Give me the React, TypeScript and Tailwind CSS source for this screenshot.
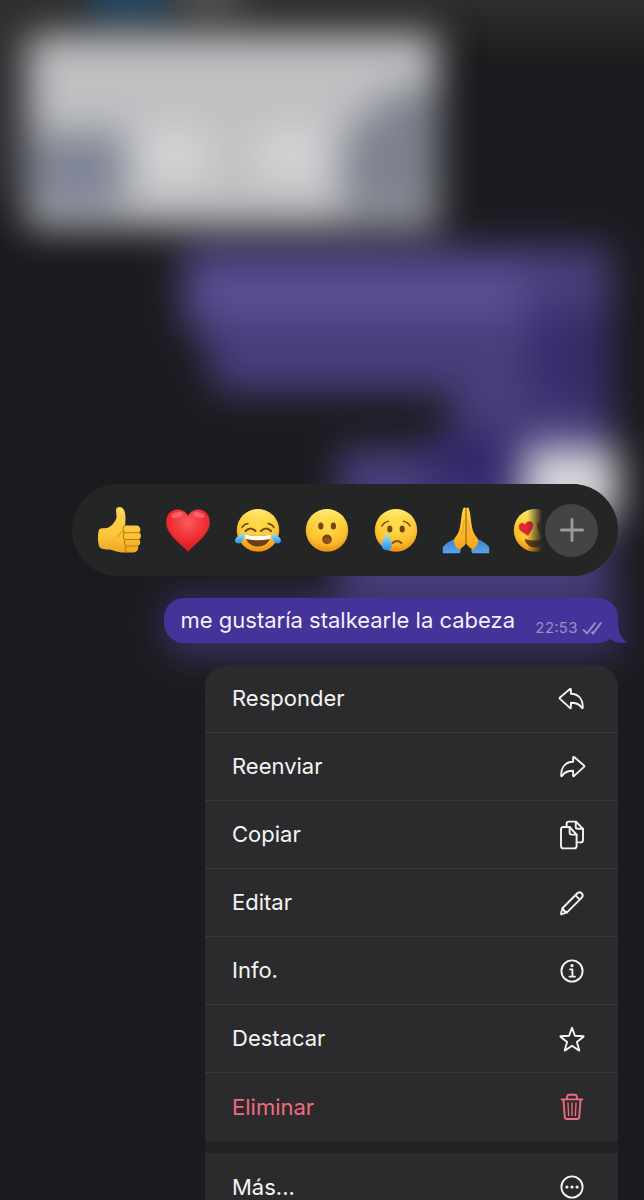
import type { ReactNode } from "react";
import clsx from "clsx";

const Gradients = () => (
  <svg className="absolute h-0 w-0" aria-hidden="true">
    <defs>
      <linearGradient id="skin" x1="0" y1="0" x2="0" y2="1">
        <stop offset="0" stopColor="#ffd250" />
        <stop offset="0.6" stopColor="#fdb92c" />
        <stop offset="1" stopColor="#f5a01c" />
      </linearGradient>
      <radialGradient id="face" cx="0.5" cy="0.42" r="0.58">
        <stop offset="0" stopColor="#fddc4a" />
        <stop offset="0.75" stopColor="#fcc42f" />
        <stop offset="1" stopColor="#ee9418" />
      </radialGradient>
      <linearGradient id="gloss" x1="0" y1="0" x2="0" y2="1">
        <stop offset="0" stopColor="#fff683" stopOpacity="0.8" />
        <stop offset="0.5" stopColor="#fed640" stopOpacity="0.1" />
        <stop offset="1" stopColor="#f08a10" stopOpacity="0.65" />
      </linearGradient>
      <linearGradient id="thumb" x1="0" y1="0" x2="0" y2="1">
        <stop offset="0" stopColor="#fed354" />
        <stop offset="0.6" stopColor="#fcc63a" />
        <stop offset="1" stopColor="#eea523" />
      </linearGradient>
      <radialGradient id="heart" cx="0.5" cy="0.3" r="0.75">
        <stop offset="0" stopColor="#fb5a5d" />
        <stop offset="0.55" stopColor="#f02c34" />
        <stop offset="1" stopColor="#cf1220" />
      </radialGradient>
      <linearGradient id="tear" x1="0" y1="0" x2="0" y2="1">
        <stop offset="0" stopColor="#a5ecfd" />
        <stop offset="1" stopColor="#2593e6" />
      </linearGradient>
      <linearGradient id="sleeve" x1="0" y1="0" x2="0" y2="1">
        <stop offset="0" stopColor="#3f82cf" />
        <stop offset="1" stopColor="#5ba4ec" />
      </linearGradient>
    </defs>
  </svg>
);

const Face = ({ children }: { children: ReactNode }) => (
  <>
    <circle cx="24" cy="24.3" r="21.2" fill="url(#face)" />
    <circle cx="24" cy="24.3" r="21.2" fill="url(#gloss)" />
    {children}
  </>
);

const reactions = [
  {
    label: "Me gusta",
    art: (
      <>
        <path
          d="M21 4C21 0.5 26 0.2 28 2.5C30.5 5.5 31 10 30 19.5H42C45.5 19.7 46.5 25 44 26.6C46.6 28 46.5 32 44 33.5C46 35 45.5 39 43 40C44 43 42 46.5 38.5 46.6H28C22 46.6 19 44.2 14 43.6C8 43.4 5 42.6 4.2 40.5C2.6 36 2.6 28 4 23.8C5 22 9 22.4 12 22C15.5 21.4 20 16.5 21.3 12.5C22 9.5 21 7 21 4Z"
          fill="url(#thumb)"
        />
        <path
          d="M30 19.7C27.5 20.5 27 25.5 30 26.7H44M30 26.7C27.5 28 27.5 32.5 30.5 33.5H44M30.5 33.5C28.5 35 29 39 31.5 40H43M31.5 40C29.5 42 30 45.5 32.5 46.4"
          fill="none"
          stroke="#bd7c0c"
          strokeWidth="1.1"
        />
        <path d="M28 25Q24 27 22.5 31" fill="none" stroke="#dc9a22" strokeWidth="1.2" />
        <path d="M24 3Q26.5 3.5 27 8" fill="none" stroke="#ffe47e" strokeWidth="1.5" />
      </>
    ),
  },
  {
    label: "Me encanta",
    art: (
      <>
        <path
          d="M24 46C20 40 2.5 30 2.2 16.5C2 8.5 7.5 3.6 13.3 3.6C18 3.6 22 6 24 10C26 6 30 3.6 34.7 3.6C40.5 3.6 46 8.5 45.8 16.5C45.5 30 28 40 24 46Z"
          fill="url(#heart)"
        />
        <ellipse cx="13" cy="9" rx="6" ry="2.6" fill="#ff9b9b" opacity="0.45" transform="rotate(-14 13 9)" />
        <ellipse cx="35" cy="9" rx="6" ry="2.6" fill="#ff9b9b" opacity="0.45" transform="rotate(14 35 9)" />
      </>
    ),
  },
  {
    label: "Me divierte",
    art: (
      <Face>
        <g fill="none" stroke="#76430f" strokeLinecap="round" strokeWidth="1.5">
          <path d="M11.5 25Q16.5 20 21.5 25M27 25Q32 20 37 25" strokeWidth="2" />
          <path d="M8 21.5Q10 18 14 17.5M40 21.5Q38 18 34 17.5" />
        </g>
        <path d="M11 28.5Q24 31.5 37 28.5C36.5 36 31 40.5 24 40.5C17 40.5 11.5 36 11 28.5Z" fill="#713d14" />
        <path d="M11 28.5Q24 31.5 37 28.5C37 31 36.6 32 36 33Q24 35.6 12 33C11.4 32 11 31 11 28.5Z" fill="#fff" />
        <path d="M9.8 26C10.5 31 9 37.5 4.5 37.5C0.5 37.5 0 33.5 3 31C5 29.3 8 28.5 9.8 26Z" fill="url(#tear)" />
        <path d="M38.2 26C37.5 31 39 37.5 43.5 37.5C47.5 37.5 48 33.5 45 31C43 29.3 40 28.5 38.2 26Z" fill="url(#tear)" />
      </Face>
    ),
  },
  {
    label: "Me asombra",
    art: (
      <Face>
        <g fill="#76430f">
          <ellipse cx="17.8" cy="20" rx="2.6" ry="3.5" />
          <ellipse cx="30.4" cy="20" rx="2.6" ry="3.5" />
          <circle cx="24" cy="33.4" r="4.8" />
        </g>
        <ellipse cx="24" cy="34.4" rx="3.6" ry="3" fill="#8d541b" />
      </Face>
    ),
  },
  {
    label: "Me entristece",
    art: (
      <Face>
        <g fill="#76430f">
          <ellipse cx="17.8" cy="23" rx="2.6" ry="3.6" />
          <ellipse cx="30.2" cy="23" rx="2.6" ry="3.6" />
        </g>
        <g fill="none" stroke="#8a5211" strokeLinecap="round" strokeWidth="1.6">
          <path d="M10 20Q12 16 16.5 15.2M38 20Q36 16 31.5 15.2" />
          <path d="M20.5 37Q25 33 29.5 37" strokeWidth="2" />
        </g>
        <path d="M14.8 27C17 31.5 20 35.5 20 39A5.2 5.2 0 0 1 9.6 39C9.6 35.5 12.6 31.5 14.8 27Z" fill="url(#tear)" />
      </Face>
    ),
  },
  {
    label: "Gracias",
    art: (
      <>
        <path d="M10 34Q5.5 36 0.8 41V47.3H17.5L19 44Q14 40 12 34Z" fill="url(#sleeve)" />
        <path d="M38 34Q42.5 36 47.2 41V47.3H30.5L29 44Q34 40 36 34Z" fill="url(#sleeve)" />
        <path
          d="M24 3C23.5 1 21.3 1 21 3L19.8 8C19 14 18.6 20 17 25C15.5 29 13 31 11.5 34C12 38.5 14 42 17.6 43.7C20 41 23 40 24 37C25 40 28 41 30.4 43.7C34 42 36 38.5 36.5 34C35 31 32.5 29 31 25C29.4 20 29 14 28.2 8L27 3C26.7 1 24.5 1 24 3Z"
          fill="url(#skin)"
        />
        <path d="M24 3V37" fill="none" stroke="#a96808" strokeWidth="1.3" />
        <path d="M22 14Q21.5 24 20 28M26 14Q26.5 24 28 28" fill="none" stroke="#e39a1c" strokeWidth="0.8" />
      </>
    ),
  },
  {
    label: "Me enamora",
    art: (
      <Face>
        <path
          d="M17 30C14 27.5 7.6 25.5 7.8 20.6C8 16.8 12 15.8 14 18.6C15.4 14.4 20.8 14 21.9 17.8C23 22 19.2 26 17 30Z"
          fill="#e3262f"
        />
        <path
          d="M31 30C34 27.5 40.4 25.5 40.2 20.6C40 16.8 36 15.8 34 18.6C32.6 14.4 27.2 14 26.1 17.8C25 22 28.8 26 31 30Z"
          fill="#e3262f"
        />
        <path d="M13.5 33Q24 36 34.5 33C33 38.5 29 41.5 24 41.5C19 41.5 15 38.5 13.5 33Z" fill="#6b3b14" />
      </Face>
    ),
  },
];

const replyPath =
  "M10 20.4L19.9 12.1Q20.9 11.4 20.9 12.7V16.8C28.4 17 32.8 22 32.8 30.4C32.8 31.4 32.2 31.4 31.8 30.8C29.6 27.2 26.6 25.8 20.9 25.8V30.4Q20.9 31.7 19.9 30.9L10 21.9Q9.2 21.1 10 20.4Z";

const actions = [
  { label: "Responder", icon: <path d={replyPath} /> },
  { label: "Reenviar", icon: <path d={replyPath} transform="matrix(-1 0 0 1 44 0)" /> },
  {
    label: "Copiar",
    icon: (
      <>
        <path d="M19.6 14H13.4Q11 14 11 16.4V33Q11 35.4 13.4 35.4H24.2Q26.6 35.4 26.6 33V21.6Z" />
        <path d="M19.6 14V19.6Q19.6 21.6 21.6 21.6H26.6" />
        <path d="M16.6 14V10.8Q16.6 8.6 18.8 8.6H26L33 15.8V27Q33 29.4 30.6 29.4H26.6" />
        <path d="M25.8 8.8V14Q25.8 15.8 27.6 15.8H33" />
      </>
    ),
  },
  {
    label: "Editar",
    icon: (
      <>
        <path d="M12.6 27L27.6 12Q29.6 10.4 31.6 12.2Q33.6 14.2 32 16.4L17 31.4L11.8 33.2Q10.8 33.4 11 32.2Z" />
        <path d="M25.4 14.2L29.8 18.6M12.6 27Q13.6 30.4 17 31.4" />
      </>
    ),
  },
  {
    label: "Info.",
    icon: (
      <>
        <circle cx="22" cy="22" r="10.6" />
        <path d="M20 20.4H22.4V27.4M19.4 27.6H25" />
        <circle cx="22" cy="16.6" r="0.7" fill="currentColor" />
      </>
    ),
  },
  {
    label: "Destacar",
    icon: (
      <path d="M22 10.8L24.9 18.8L33.4 19.2Q33.8 19.3 33.5 19.7L26.9 25L29.3 33.2Q29.3 33.7 28.9 33.5L22 28.8L15.1 33.5Q14.7 33.7 14.7 33.2L17.1 25L10.5 19.7Q10.2 19.3 10.6 19.2L19.1 18.8Z" />
    ),
  },
  {
    label: "Eliminar",
    danger: true,
    icon: (
      <>
        <path d="M11.6 14.4H32.4M16.8 14.2L17.4 11Q17.8 9.8 19 9.8H25Q26.2 9.8 26.6 11L27.2 14.2" />
        <path d="M13.4 14.6L14.8 32.2Q15 34 16.8 34H27.2Q29 34 29.2 32.2L30.6 14.6" />
        <path d="M18 18L18.6 30.6M22 18V30.6M26 18L25.4 30.6" strokeWidth="1.4" />
      </>
    ),
  },
];

const moreIcon = (
  <>
    <circle cx="22" cy="22" r="10.6" />
    <g fill="currentColor" stroke="none">
      <circle cx="16.9" cy="22" r="1.6" />
      <circle cx="22" cy="22" r="1.6" />
      <circle cx="27.1" cy="22" r="1.6" />
    </g>
  </>
);

type MenuItemProps = {
  label: string;
  icon: ReactNode;
  danger?: boolean;
  divider?: boolean;
};

const MenuItem = ({ label, icon, danger, divider }: MenuItemProps) => (
  <li>
    <button
      type="button"
      className={clsx(
        "flex h-[68px] w-full items-center justify-between bg-[#2b2b2d] pl-[27px] pr-6 text-left text-[22px]",
        danger ? "text-[#ef6b80]" : "text-[#f4f4f5]",
        divider && "border-b border-[#39393b]"
      )}
    >
      {label}
      <svg
        viewBox="0 0 44 44"
        className="size-11 shrink-0"
        fill="none"
        stroke="currentColor"
        strokeWidth="1.9"
        strokeLinecap="round"
        strokeLinejoin="round"
        aria-hidden="true"
      >
        {icon}
      </svg>
    </button>
  </li>
);

// Out of focus chat behind the overlay
const BlurredChat = () => (
  <svg
    viewBox="0 0 644 1200"
    preserveAspectRatio="none"
    className="absolute inset-0 h-full w-full"
    aria-hidden="true"
  >
    <defs>
      <filter
        id="soft"
        filterUnits="userSpaceOnUse"
        x="-80"
        y="-80"
        width="804"
        height="1360"
        colorInterpolationFilters="sRGB"
      >
        <feGaussianBlur stdDeviation="19" />
      </filter>
      <linearGradient id="header" x1="0" y1="0" x2="0" y2="1">
        <stop offset="0" stopColor="#2c2d2e" />
        <stop offset="1" stopColor="#1b1b1e" />
      </linearGradient>
    </defs>
    <rect width="644" height="1200" fill="#1b1b1f" />
    <rect width="644" height="64" fill="url(#header)" />
    <g filter="url(#soft)">
      <rect x="-60" y="-40" width="70" height="230" fill="#303033" />
      <rect x="94" y="-60" width="72" height="76" fill="#1d4869" />
      <rect x="180" y="-60" width="60" height="68" fill="#5a5a5a" />
      <rect x="26" y="33" width="412" height="194" fill="#bfc0c2" />
      <rect x="34" y="133" width="90" height="76" fill="#7f8495" />
      <path d="M392 90H434V214H344V138Z" fill="#7e828f" />
      <rect x="140" y="128" width="70" height="54" fill="#d3d4d6" />
      <rect x="257" y="128" width="70" height="54" fill="#d3d4d6" />
      <path d="M182 246H610V596H338V448H452V392H216L200 330H182Z" fill="#493e7c" />
      <rect x="190" y="266" width="336" height="52" fill="#5a4f92" />
      <rect x="530" y="312" width="80" height="94" fill="#372d6c" />
      <rect x="430" y="432" width="84" height="64" fill="#33296a" />
      <rect x="524" y="448" width="94" height="72" fill="#dad8dd" />
      <rect x="168" y="598" width="450" height="56" fill="#3c346b" />
    </g>
  </svg>
);

const ReactionBar = () => (
  <div className="relative w-full max-w-[546px] overflow-hidden rounded-full bg-[#242625]">
    <div className="flex h-[92px] items-center justify-between pl-[23px] pr-[59px]">
      {reactions.map(({ label, art }) => (
        <button key={label} type="button" aria-label={label} className="size-12 shrink-0">
          <svg viewBox="0 0 48 48" className="size-12" aria-hidden="true">
            {art}
          </svg>
        </button>
      ))}
    </div>
    <div className="absolute inset-y-0 right-0 flex items-center bg-linear-to-r from-transparent from-10% to-[#242625] to-25% pl-7 pr-5">
      <button
        type="button"
        aria-label="Más reacciones"
        className="flex size-[53px] items-center justify-center rounded-full bg-[#434446]"
      >
        <svg viewBox="0 0 24 24" className="size-6" stroke="#9a9a9c" strokeWidth="2.8" strokeLinecap="round" aria-hidden="true">
          <path d="M12 1.4V22.6M1.4 12H22.6" />
        </svg>
      </button>
    </div>
  </div>
);

const MessageBubble = () => (
  <div className="relative flex h-[45px] items-center gap-5 rounded-[20px] bg-[#443398] px-4">
    <p className="whitespace-nowrap text-[22px] text-[#f3f1fb]">me gustaría stalkearle la cabeza</p>
    <div className="flex items-center gap-1 self-end pb-1 text-[#9a8fc9]">
      <time className="text-[15px] tabular-nums">22:53</time>
      <svg viewBox="0 0 20 14" className="h-[14px] w-5" fill="none" stroke="currentColor" strokeWidth="1.8" aria-label="Leído">
        <path d="M1 8.4L5 12.4L13.4 1.6M9.6 10.6L11 12.4L19.2 1.6" />
      </svg>
    </div>
    <svg viewBox="0 0 24 27" className="absolute -right-[9px] bottom-0 h-[27px] w-6" aria-hidden="true">
      <path d="M15 0V6C15 15 17.5 22 24 26.2C17 28 10.5 26.4 7.4 22.6L0 24V0Z" fill="#443398" />
    </svg>
  </div>
);

const ContextMenu = () => (
  <nav
    aria-label="Acciones del mensaje"
    className="w-[413px] max-w-full shrink-0 overflow-hidden rounded-[22px] bg-[#222224]"
  >
    <ul>
      {actions.map((action, i) => (
        <MenuItem key={action.label} {...action} divider={i < actions.length - 1} />
      ))}
    </ul>
    <ul className="mt-3">
      <MenuItem label="Más..." icon={moreIcon} />
    </ul>
  </nav>
);

const App = () => {
  return (
    <main className="relative h-screen overflow-hidden bg-[#1b1b1f] font-['Inter','Liberation_Sans',sans-serif]">
      <Gradients />
      <BlurredChat />
      <div className="relative flex flex-col items-end gap-[22px] px-[26px] pt-[484px]">
        <ReactionBar />
        <MessageBubble />
        <ContextMenu />
      </div>
    </main>
  );
};

export default App;
